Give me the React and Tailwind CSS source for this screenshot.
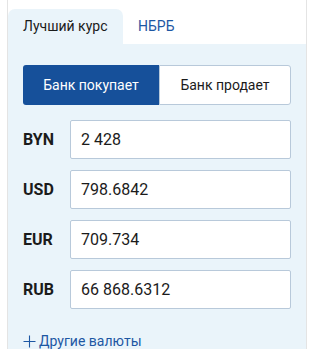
import React, { useState } from 'react';

const rates = [
  { code: 'BYN', value: '2 428' },
  { code: 'USD', value: '798.6842' },
  { code: 'EUR', value: '709.734' },
  { code: 'RUB', value: '66 868.6312' },
];

const App = () => {
  const [tab, setTab] = useState('best');
  const [mode, setMode] = useState('buy');

  return (
    <div className="w-[324px] h-[349px] bg-white overflow-hidden font-['Roboto',sans-serif] text-[#1b1b1b]">
      <div className="ml-[7px] w-[300px] h-full border-x border-[#e4e4e4] pt-[9px] flex flex-col">
        {/* Tabs */}
        <div className="flex h-[35px] shrink-0">
          <button
            onClick={() => setTab('best')}
            className={`w-[115px] pl-[15px] text-left text-[14px] rounded-t-[7px] ${tab === 'best' ? 'bg-[#eaf4fa] text-[#1b1b1b]' : 'text-[#1d57a3]'}`}
          >
            Лучший курс
          </button>
          <button
            onClick={() => setTab('nbrb')}
            className={`px-[15px] text-[14px] rounded-t-[7px] ${tab === 'nbrb' ? 'bg-[#eaf4fa] text-[#1b1b1b]' : 'text-[#1d57a3]'}`}
          >
            НБРБ
          </button>
        </div>

        {/* Panel */}
        <div className="flex-1 bg-[#eaf4fa] px-[15px] pt-[21px]">
          <div className="grid grid-cols-[136px_1fr] h-[40px]">
            <button
              onClick={() => setMode('buy')}
              className={`rounded-l-[3px] text-[14px] ${mode === 'buy' ? 'bg-[#16509a] text-white' : 'bg-white border border-[#b8c9da] text-[#1b1b1b]'}`}
            >
              Банк покупает
            </button>
            <button
              onClick={() => setMode('sell')}
              className={`rounded-r-[3px] text-[14px] ${mode === 'sell' ? 'bg-[#16509a] text-white' : 'bg-white border border-[#b8c9da] text-[#1b1b1b]'}`}
            >
              Банк продает
            </button>
          </div>

          <div className="mt-[15px] flex flex-col gap-[11px]">
            {rates.map((r) => (
              <div key={r.code} className="flex items-center">
                <span className="w-[47px] text-[16px] font-bold">{r.code}</span>
                <input
                  defaultValue={r.value}
                  className="w-[221px] h-[39px] bg-white border border-[#b8c9da] rounded-[2px] px-[10px] text-[16px] text-[#1b1b1b] outline-none"
                />
              </div>
            ))}
          </div>

          <button className="mt-[22px] flex items-center gap-[3px] text-[14px] text-[#1d57a3]">
            <svg width="13" height="13" viewBox="0 0 13 13" className="shrink-0">
              <path d="M6.5 0.5v12M0.5 6.5h12" stroke="currentColor" strokeWidth="1.1" />
            </svg>
            Другие валюты
          </button>
        </div>
      </div>
    </div>
  );
};

export default App;
